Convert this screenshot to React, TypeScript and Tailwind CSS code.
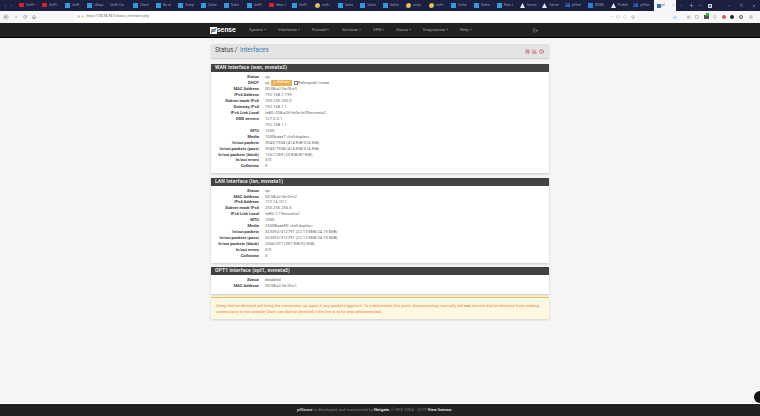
import { BarChart3, ChevronLeft, ChevronRight, ChevronDown, Home, Lock, Plus, RotateCw, Star, ArrowLeft, ArrowRight, Minus, Square, X, SlidersHorizontal, HelpCircle, LogOut, RefreshCw, Menu, Library, Info, Shield, Download } from 'lucide-react';

type TabKind = 'yt' | 'blue' | 'none' | 'chrome' | 'tri' | 'pf' | 'ddns';

const tabs: [TabKind, string][] = [
  ['yt', 'UniFi -'], ['yt', 'UniFi -'], ['blue', 'UniFi -'], ['blue', 'Ubiqu'], ['none', 'UniFi Clo'],
  ['blue', 'Client'], ['blue', 'No st'], ['blue', 'Simpl'], ['blue', 'Solve'], ['blue', 'Solve'],
  ['blue', 'UniFi -'], ['yt', 'How t'], ['blue', 'UniFi'], ['chrome', 'unifi i'], ['blue', 'Solve'],
  ['blue', 'Solve'], ['blue', 'Settin'], ['chrome', 'unify i'], ['chrome', 'unifi i'], ['blue', 'Solve'],
  ['blue', 'Settin'], ['blue', 'How t'], ['tri', 'Server'], ['tri', 'Server'], ['pf', 'pfSen'],
  ['ddns', 'DDNS'], ['tri', 'Proble'], ['pf', 'pfSen'],
];

const wan: [string, string][] = [
  ['Status', 'up'],
  ['DHCP', 'dhcp'],
  ['MAC Address', '00:08:a2:0e:0f:e3'],
  ['IPv4 Address', '192.168.1.199'],
  ['Subnet mask IPv4', '255.255.255.0'],
  ['Gateway IPv4', '192.168.1.1'],
  ['IPv6 Link Local', 'fe80::208:a2ff:fe0e:fe3%mvneta2'],
  ['DNS servers', '127.0.0.1'],
  ['', '192.168.1.1'],
  ['MTU', '1500'],
  ['Media', '1000baseT <full-duplex>'],
  ['In/out packets', '3943/7558 (414 KiB/514 KiB)'],
  ['In/out packets (pass)', '3943/7558 (414 KiB/514 KiB)'],
  ['In/out packets (block)', '126/1189 (23 KiB/87 KiB)'],
  ['In/out errors', '0/0'],
  ['Collisions', '0'],
];

const lan: [string, string][] = [
  ['Status', 'up'],
  ['MAC Address', '00:08:a2:0e:0f:e2'],
  ['IPv4 Address', '172.16.10.1'],
  ['Subnet mask IPv4', '255.255.255.0'],
  ['IPv6 Link Local', 'fe80::1:1%mvneta1'],
  ['MTU', '1500'],
  ['Media', '2500BaseKX <full-duplex>'],
  ['In/out packets', '323392/312791 (22.13 MiB/24.73 MiB)'],
  ['In/out packets (pass)', '323392/312791 (22.13 MiB/24.73 MiB)'],
  ['In/out packets (block)', '2566/377 (397 KiB/32 KiB)'],
  ['In/out errors', '0/0'],
  ['Collisions', '0'],
];

const opt: [string, string][] = [
  ['Status', 'disabled'],
  ['MAC Address', '00:08:a2:0e:0f:e1'],
];

const nav = [
  ['System', 'w-[29px]'],
  ['Interfaces', 'w-[34px]'],
  ['Firewall', 'w-[30px]'],
  ['Services', 'w-[31px]'],
  ['VPN', 'w-[23px]'],
  ['Status', 'w-[27px]'],
  ['Diagnostics', 'w-[37px]'],
  ['Help', 'w-[20px]'],
];

function TabIcon({ kind }: { kind: TabKind }) {
  if (kind === 'yt') return <div className="w-[5px] h-[4px] rounded-[1px] bg-[#e0202a] shrink-0" />;
  if (kind === 'blue') return <div className="w-[5px] h-[5px] bg-[#2f9ad8] shrink-0" />;
  if (kind === 'chrome')
    return <div className="w-[5px] h-[5px] rounded-full bg-gradient-to-br from-[#e8574b] via-[#f2cd4b] to-[#4fa765] shrink-0" />;
  if (kind === 'tri')
    return (
      <svg viewBox="0 0 10 10" className="w-[5px] h-[5px] shrink-0">
        <path d="M5 0 10 10H0Z" fill="#e8e8ee" />
      </svg>
    );
  if (kind === 'pf') return <div className="w-[5px] h-[4px] bg-gradient-to-br from-[#232f6e] to-[#2f78c8] shrink-0" />;
  if (kind === 'ddns') return <div className="w-[5px] h-[5px] bg-[#2a7fd0] shrink-0" />;
  return null;
}

function BrowserChrome() {
  return (
    <>
      <div className="h-[11px] bg-[#1c2040] flex items-center text-[3.6px] text-[#9a9db3] shrink-0">
        <div className="w-[16.5px] flex items-center gap-[1px] pl-[3px] text-[#777b90]">
          <ChevronLeft size={5} />
          <ChevronRight size={5} />
        </div>
        {tabs.map(([kind, label], i) => (
          <div key={i} className="w-[22.75px] flex items-center gap-[2px] pl-[2.5px] overflow-hidden">
            <TabIcon kind={kind} />
            <span className="truncate">{label}</span>
          </div>
        ))}
        <div className="w-[22px] h-full bg-[#f5f6f7] flex items-center gap-[1px] pl-[3px] text-[#555] relative">
          <div className="w-[4px] h-[4px] bg-[#3b6fb8]" />
          <span>pf</span>
          <X size={3} className="absolute right-[1px] top-[4px]" />
        </div>
        <ChevronRight size={5} className="ml-[3px] text-[#777b90]" />
        <Plus size={5} className="ml-[5px] text-[#c9cbd6]" />
        <ChevronDown size={5} className="ml-[4px] text-[#c9cbd6]" />
        <div className="ml-[5px] w-[4px] h-[4px] bg-[#6d7080] border-[0.5px] border-[#c9cbd6]" />
        <Minus size={4} className="ml-[15px] text-[#9a9db0]" />
        <Square size={3} className="ml-[9px] text-[#c9cbd6]" />
        <X size={4} className="ml-[9px] text-[#c9cbd6]" />
      </div>
      <div className="h-[11px] bg-[#f7f7f8] flex items-center shrink-0 text-[#55565c]">
        <div className="w-[75px] flex items-center pl-[3px] gap-[5px]">
          <div className="w-[6px] h-[6px] rounded-full bg-[#dcdcde] flex items-center justify-center">
            <ArrowLeft size={4} />
          </div>
          <ArrowRight size={4} className="text-[#aaa]" />
          <RotateCw size={4} />
          <Home size={4} />
        </div>
        <div className="w-[182px] h-[10px] bg-white rounded-l-[1px] flex items-center pl-[2px] gap-[1px] text-[3.4px] text-[#777]">
          <Info size={3} />
          <Lock size={3} className="text-[#d7901a]" />
          <span className="ml-[1px]">
            https://<span className="text-[#222]">172.16.10.1</span>/status_interfaces.php
          </span>
        </div>
        <div className="w-[380px] h-[10px] bg-white rounded-r-[1px] flex items-center justify-end gap-[2px] pr-[2px]">
          <span className="text-[4px] leading-none text-[#666]">···</span>
          <Shield size={4} className="ml-[1px] text-[#888]" />
          <Shield size={4} className="ml-[1px] text-[#9ab]" />
          <Star size={4} className="ml-[2px]" />
        </div>
        <div className="flex items-center gap-[4.5px] pl-[36px]">
          <Download size={4} className="text-[#3d9be9]" />
          <Library size={4} className="ml-[5px] text-[#777]" />
          <Square size={4} className="text-[#777]" />
          <div className="w-[5px] h-[4px] bg-[#555] relative">
            <div className="absolute -top-[2px] right-0 w-[3px] h-[3px] bg-[#18c418]" />
          </div>
          <Shield size={4} className="text-[#35a552]" />
          <div className="w-[4px] h-[4px] rounded-full bg-[#d35a60]" />
          <div className="w-[4px] h-[4px] rounded-full bg-[#222]" />
          <div className="w-[4px] h-[4px] rounded-full border border-[#555]" />
          <Menu size={4} className="ml-[2px]" />
        </div>
      </div>
    </>
  );
}

function Navbar() {
  return (
    <div className="h-[15px] mt-[1px] bg-[#212121] border-b border-black flex items-center pl-[210px] shrink-0">
      <div className="w-[39px] flex items-center text-[7px] leading-none font-bold text-[#f2f2f2]">
        <div className="w-[7px] h-[7px] bg-white text-[#222] text-[5px] flex items-center justify-center italic">pf</div>
        <span>sense</span>
      </div>
      {nav.map(([label, w]) => (
        <div key={label} className={`${w} shrink-0 flex items-center gap-[1px] text-[4.2px] text-[#a0a0a0]`}>
          <span>{label}</span>
          <span className="w-0 h-0 border-x-[1px] border-t-[1px] border-x-transparent border-t-[#a0a0a0]" />
        </div>
      ))}
      <LogOut size={5} className="ml-[53px] text-[#bbb]" />
    </div>
  );
}

function Panel({ title, rows, className }: { title: string; rows: [string, string][]; className: string }) {
  return (
    <div className={`${className} bg-white shadow-[0_1px_2px_rgba(0,0,0,0.2)]`}>
      <div className="h-[8px] bg-[#424242] pl-[4px] flex items-center text-[5px] font-bold text-[#e6e6e6] tracking-[0.12px] whitespace-nowrap">
        {title}
      </div>
      <div className="pt-[1.6px] text-[4.15px] leading-[5.93px]">
        {rows.map(([k, v], i) => (
          <div key={i} className={v === 'dhcp' ? 'flex h-[6.9px]' : 'flex h-[5.93px]'}>
            <div className="w-[48px] shrink-0 text-right font-bold text-[#444] whitespace-nowrap flex justify-end">{k}</div>
            <div className="pl-[6px] text-[#666] flex items-center whitespace-nowrap">
              {v === 'dhcp' ? (
                <>
                  <span>up</span>
                  <span className="ml-[1.5px] h-[6px] w-[21px] bg-[#f0ad4e] rounded-[0.5px] flex items-center justify-center gap-[1px] text-white text-[3.6px]">
                    <RefreshCw size={3} />
                    Release
                  </span>
                  <span className="ml-[1.5px] w-[4px] h-[4px] border-[0.5px] border-[#777] bg-white rounded-[0.5px]" />
                  <span className="ml-[0.5px]">Relinquish Lease</span>
                </>
              ) : (
                v
              )}
            </div>
          </div>
        ))}
      </div>
    </div>
  );
}

export default function App() {
  return (
    <div
      className="w-[760px] h-[416px] overflow-hidden flex flex-col bg-[#f5f5f5] relative"
      style={{ fontFamily: 'Roboto, "Liberation Sans", sans-serif' }}
    >
      <BrowserChrome />
      <Navbar />
      <div className="flex-1 w-[338px] ml-[211px] pt-[6px]">
        <div className="h-[14px] bg-[#e3e3e3] rounded-[1px] shadow-[0_1px_2px_rgba(0,0,0,0.2)] flex items-center pl-[4px] pr-[5px] text-[6.4px]">
          <span className="text-[#444]">Status /</span>
          <span className="ml-[2.5px] text-[#3f7fb8]">Interfaces</span>
          <div className="ml-auto flex items-center gap-[2px] text-[#c12a2a]">
            <SlidersHorizontal size={5} />
            <BarChart3 size={5} />
            <HelpCircle size={5} />
          </div>
        </div>
        <Panel title="WAN Interface (wan, mvneta2)" rows={wan} className="mt-[6px] h-[109px]" />
        <Panel title="LAN Interface (lan, mvneta1)" rows={lan} className="mt-[5px] h-[85px]" />
        <Panel title="OPT1 Interface (opt1, mvneta0)" rows={opt} className="mt-[4px] h-[27px]" />
        <div className="mt-[3px] h-[22px] bg-[#fff8e1] border-t border-[#fbc02d] shadow-[0_1px_2px_rgba(0,0,0,0.15)] pl-[5px] pr-[8px] pt-[5px] text-[4.15px] leading-[6px] text-[#f0803a]">
          Using dial-on-demand will bring the connection up again if any packet triggers it. To substantiate this point: disconnecting manually will <b>not</b> prevent dial-on-demand from making connections to the outside! Don't use dial-on-demand if the line is to be kept disconnected.
        </div>
      </div>
      <div className="h-[13px] border-t border-white bg-[#212121] pl-[297px] flex items-center text-[4.25px] text-[#808080] shrink-0">
        <b className="text-[#ddd] font-medium">pfSense</b>
        <span className="ml-[1px]">is developed and maintained by</span>
        <b className="ml-[1px] text-[#eee] font-medium">Netgate.</b>
        <span className="ml-[1px]">© ESF 2004 - 2019</span>
        <b className="ml-[1px] text-[#eee] font-medium">View license.</b>
      </div>
      <div className="absolute left-[754px] top-[391px] w-[12px] h-[12px] rounded-full bg-[#111]" />
    </div>
  );
}
